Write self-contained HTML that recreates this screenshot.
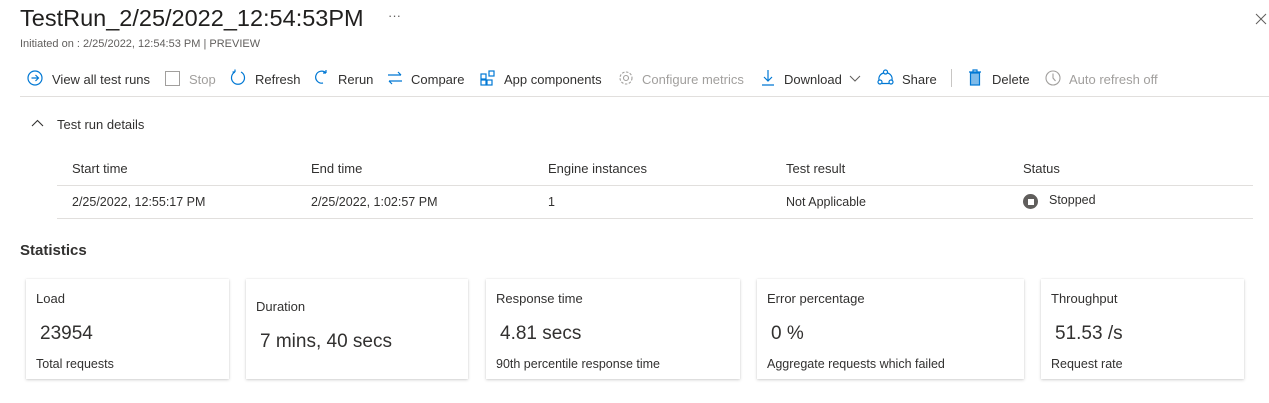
<!DOCTYPE html>
<html><head><style>
*{margin:0;padding:0;box-sizing:border-box}
body{width:1269px;height:403px;background:#fff;font-family:"Liberation Sans",sans-serif;color:#323130;position:relative;overflow:hidden}
.a{position:absolute;white-space:nowrap}
.tb{font-size:13px;color:#323130}
.dis{color:#a19f9d}
svg{position:absolute}
.card{position:absolute;top:279px;height:100px;background:#fff;box-shadow:0 1px 3px rgba(0,0,0,.18),0 0 1px rgba(0,0,0,.1)}
.card .t{position:absolute;left:10px;top:12px;font-size:13px}
.card .v{position:absolute;left:14px;top:44px;font-size:19px}
.card .s{position:absolute;left:10px;top:78px;font-size:12.5px}
.th{font-size:13px;top:161px}
.td{font-size:12.5px;top:195px}
</style></head><body>
<div class="a" style="left:20px;top:5px;font-size:23.5px;color:#201f1e">TestRun_2/25/2022_12:54:53PM</div>
<div class="a" style="left:388px;top:8px;font-size:13px;color:#605e5c">···</div>
<div class="a" style="left:20px;top:38px;font-size:11px;color:#605e5c">Initiated on : 2/25/2022, 12:54:53 PM | PREVIEW</div>
<svg style="left:1255px;top:13px" width="12" height="12" viewBox="0 0 12 12" stroke="#605e5c" stroke-width="1"><path d="M1 1l10 10M11 1L1 11"/></svg>

<svg style="left:27px;top:70px" width="16" height="16" viewBox="0 0 16 16" fill="none" stroke="#0078d4" stroke-width="1.2"><circle cx="8" cy="8" r="7"/><path d="M4.5 8h7M8.5 5l3 3-3 3"/></svg>
<div class="a tb" style="left:52px;top:72px">View all test runs</div>
<div class="a" style="left:165px;top:71px;width:15px;height:15px;border:1px solid #a19f9d"></div>
<div class="a tb dis" style="left:189px;top:72px">Stop</div>
<svg style="left:230px;top:69px" width="16" height="17" viewBox="0 0 16 17" fill="none" stroke="#0078d4" stroke-width="1.2"><path d="M5 3A6.5 6.5 0 1 0 11 3M5 3V0.5M5 3H2.5"/></svg>
<div class="a tb" style="left:255px;top:72px">Refresh</div>
<svg style="left:315px;top:69px" width="14" height="16" viewBox="0 0 14 16" fill="none" stroke="#0078d4" stroke-width="1.2"><path d="M11 4A6 6 0 1 0 8 14M11 4V1M11 4H8"/></svg>
<div class="a tb" style="left:338px;top:72px">Rerun</div>
<svg style="left:387px;top:70px" width="16" height="16" viewBox="0 0 16 16" fill="none" stroke="#0078d4" stroke-width="1.2"><path d="M1 5h13M11 2l3 3M15 11H2M5 14l-3-3"/></svg>
<div class="a tb" style="left:411px;top:72px">Compare</div>
<svg style="left:480px;top:70px" width="16" height="16" viewBox="0 0 16 16" fill="none" stroke="#0078d4" stroke-width="1.2"><rect x="1" y="4" width="5" height="5"/><rect x="1" y="10" width="5" height="5"/><rect x="7" y="10" width="5" height="5"/><rect x="9" y="1" width="5" height="5"/></svg>
<div class="a tb" style="left:504px;top:72px">App components</div>
<svg style="left:618px;top:70px" width="16" height="16" viewBox="0 0 16 16" fill="none" stroke="#a19f9d" stroke-width="1.1"><circle cx="8" cy="8" r="2.5"/><circle cx="8" cy="8" r="6" stroke-dasharray="2.5 1.5"/></svg>
<div class="a tb dis" style="left:642px;top:72px">Configure metrics</div>
<svg style="left:761px;top:69px" width="14" height="17" viewBox="0 0 14 17" fill="none" stroke="#0078d4" stroke-width="1.2"><path d="M7 1v11M3 8l4 4 4-4M1 16h12"/></svg>
<div class="a tb" style="left:784px;top:72px">Download</div>
<svg style="left:849px;top:75px" width="12" height="8" viewBox="0 0 12 8" fill="none" stroke="#605e5c" stroke-width="1"><path d="M1 1l5 5 5-5"/></svg>
<svg style="left:877px;top:69px" width="17" height="17" viewBox="0 0 17 17" fill="none" stroke="#0078d4" stroke-width="1.2"><circle cx="8.5" cy="3" r="2"/><circle cx="3" cy="13" r="2"/><circle cx="14" cy="13" r="2"/><path d="M6.5 4A6 6 0 0 0 2 11M10.5 4A6 6 0 0 1 15 11M5 14.5h7"/></svg>
<div class="a tb" style="left:902px;top:72px">Share</div>
<div class="a" style="left:951px;top:69px;width:1px;height:18px;background:#c8c6c4"></div>
<svg style="left:968px;top:69px" width="14" height="17" viewBox="0 0 14 17" fill="none" stroke="#0078d4" stroke-width="1.2"><path d="M1 3h12M5 3V1h4v2"/><rect x="2.5" y="4" width="9" height="12" fill="#0078d4" fill-opacity=".5"/></svg>
<div class="a tb" style="left:992px;top:72px">Delete</div>
<svg style="left:1045px;top:70px" width="16" height="16" viewBox="0 0 16 16" fill="none" stroke="#a19f9d" stroke-width="1.1"><circle cx="8" cy="8" r="7"/><path d="M8 3.5V8l2.5 3"/></svg>
<div class="a tb dis" style="left:1069px;top:72px">Auto refresh off</div>
<div class="a" style="left:20px;top:96px;width:1249px;height:1px;background:#e1dfdd"></div>

<svg style="left:31px;top:119px" width="13" height="8" viewBox="0 0 13 8" fill="none" stroke="#323130" stroke-width="1.1"><path d="M1 7l5.5-5.5L12 7"/></svg>
<div class="a" style="left:57px;top:117px;font-size:13px">Test run details</div>
<div class="a th" style="left:72px">Start time</div>
<div class="a th" style="left:311px">End time</div>
<div class="a th" style="left:548px">Engine instances</div>
<div class="a th" style="left:786px">Test result</div>
<div class="a th" style="left:1023px">Status</div>
<div class="a" style="left:57px;top:185px;width:1196px;height:1px;background:#e1dfdd"></div>
<div class="a td" style="left:72px">2/25/2022, 12:55:17 PM</div>
<div class="a td" style="left:311px">2/25/2022, 1:02:57 PM</div>
<div class="a td" style="left:548px">1</div>
<div class="a td" style="left:786px">Not Applicable</div>
<div class="a" style="left:1023px;top:194px;width:15px;height:15px;border-radius:50%;background:#605e5c"><div style="position:absolute;left:4.5px;top:4.5px;width:6px;height:6px;background:#fff"></div></div>
<div class="a td" style="left:1049px;top:193px">Stopped</div>
<div class="a" style="left:57px;top:218px;width:1196px;height:1px;background:#e1dfdd"></div>

<div class="a" style="left:20px;top:242px;font-size:15px;font-weight:bold;color:#323130">Statistics</div>
<div class="card" style="left:26px;width:203px"><div class="t">Load</div><div class="v">23954</div><div class="s">Total requests</div></div>
<div class="card" style="left:246px;width:222px"><div class="t" style="top:20px">Duration</div><div class="v" style="top:52px">7 mins, 40 secs</div></div>
<div class="card" style="left:486px;width:254px"><div class="t">Response time</div><div class="v">4.81 secs</div><div class="s">90th percentile response time</div></div>
<div class="card" style="left:757px;width:267px"><div class="t">Error percentage</div><div class="v">0 %</div><div class="s">Aggregate requests which failed</div></div>
<div class="card" style="left:1041px;width:203px"><div class="t">Throughput</div><div class="v">51.53 /s</div><div class="s">Request rate</div></div>
</body></html>
